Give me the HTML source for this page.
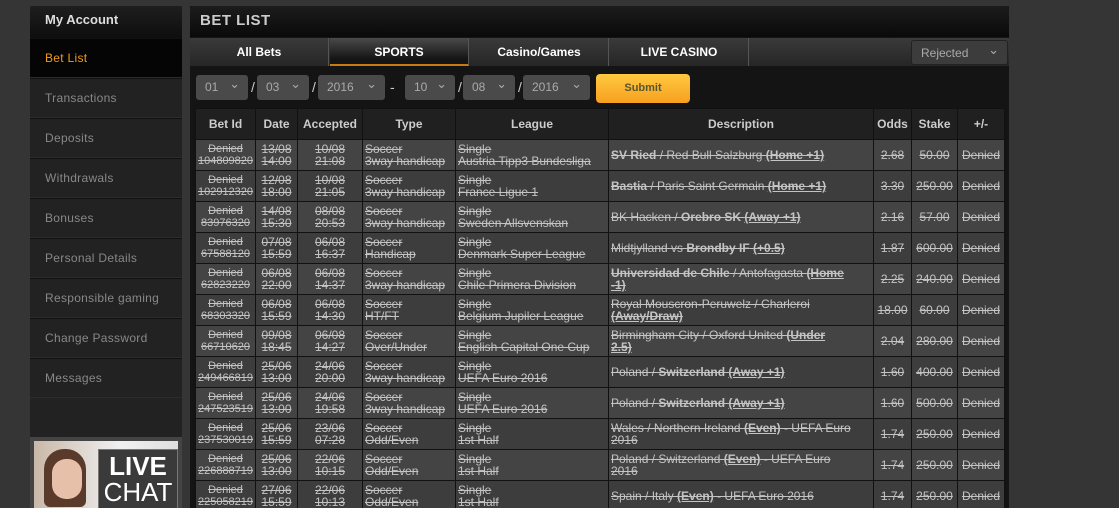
<!DOCTYPE html>
<html><head><meta charset="utf-8"><style>
*{box-sizing:border-box;margin:0;padding:0}
html,body{width:1119px;height:508px;overflow:hidden}
body{background:#353535;font-family:"Liberation Sans",Tahoma,sans-serif;position:relative}
.side{position:absolute;left:30px;top:6px;width:152px;height:502px;background:#222}
.side .hd{height:32px;background:linear-gradient(#1e1e1e,#0e0e0e);color:#ddd;font-weight:bold;font-size:13px;padding:6px 15px;border-radius:3px 3px 0 0}
.side .it{height:40px;border-top:1px solid #111;border-bottom:1px solid #2c2c2c;color:#888;font-size:12px;padding:12px 15px;letter-spacing:.3px}
.side .it.act{background:#050505;color:#f39a1d}
.chat{position:absolute;left:30px;top:437px;width:152px;height:71px;background:#444;padding:4px 4px 0 4px}
.chat .img{width:144px;height:67px;background:linear-gradient(90deg,#c9b8a8,#f1f1f1 60%,#ddd);position:relative;overflow:hidden}
.chat .box{position:absolute;left:64px;top:8px;width:80px;height:60px;background:#3a3a3a;border:1px solid #777;color:#fff;text-align:center;font-size:26px;line-height:26px;padding-top:3px}
.main{position:absolute;left:190px;top:6px;width:819px;height:502px;background:#141414}
.title{height:31px;background:linear-gradient(#1c1c1c,#0a0a0a);color:#ccc;font-weight:bold;font-size:15px;padding:6px 10px;letter-spacing:.5px;border-radius:3px 3px 0 0}
.tabs{position:absolute;top:32px;left:0;width:819px;height:28px;background:linear-gradient(#3a3a3a,#262626)}
.tab{position:absolute;top:0;height:28px;width:139px;color:#fff;font-weight:bold;font-size:12px;text-align:center;line-height:28px;border-right:1px solid #555}
.tab.act{background:linear-gradient(#4a4a4a,#151515 80%);border-bottom:2px solid #c97a10}
.sel{position:absolute;background:#4a4a4a;color:#aaa;font-size:12px;border-radius:3px;padding:5px 9px;height:25px}
.sel:after{content:"⌄";position:absolute;right:8px;top:1px;font-size:13px;color:#aaa}
.slash{position:absolute;color:#ccc;font-size:14px;top:73px}
.submit{position:absolute;left:406px;top:68px;width:94px;height:29px;border-radius:4px;background:linear-gradient(#ffc940,#f8a020);color:#553;font-weight:bold;font-size:11px;text-align:center;line-height:29px}
table{position:absolute;left:5px;top:102px;width:809px;border-collapse:collapse;table-layout:fixed;font-size:12px;color:#c4c4c4}
td,th{border:1px solid #111;height:31px;overflow:hidden;white-space:nowrap;line-height:12.5px}
th{background:#202020;color:#ccc;font-size:12px;height:31px}
td{text-decoration:line-through;padding:0 2px}
td:first-child{font-size:11px;padding:0}
tr:nth-child(odd) td{background:#3d3d3d}
tr:nth-child(even) td{background:#444}
.c{text-align:center}
b.u{text-decoration:underline line-through}
</style></head><body>
<div class="side">
<div class="hd">My Account</div>
<div class="it act">Bet List</div>
<div class="it">Transactions</div>
<div class="it">Deposits</div>
<div class="it">Withdrawals</div>
<div class="it">Bonuses</div>
<div class="it">Personal Details</div>
<div class="it">Responsible gaming</div>
<div class="it">Change Password</div>
<div class="it">Messages</div>
</div>
<div class="chat"><div class="img"><div style="position:absolute;left:10px;top:8px;width:42px;height:58px;border-radius:20px 20px 6px 6px;background:#5a3a2a"></div><div style="position:absolute;left:18px;top:18px;width:30px;height:40px;border-radius:14px;background:#e6c0a8"></div><div class="box"><b>LIVE</b><br>CHAT</div></div></div>
<div class="main">
<div class="title">BET LIST</div>
<div class="tabs">
<div class="tab" style="left:0">All Bets</div>
<div class="tab act" style="left:140px">SPORTS</div>
<div class="tab" style="left:280px">Casino/Games</div>
<div class="tab" style="left:420px">LIVE CASINO</div>
<div class="sel" style="left:721px;top:2px;width:97px;background:#3c3c3c;border:1px solid #222">Rejected</div>
</div>
<div class="sel" style="left:6px;top:69px;width:52px">01</div>
<div class="slash" style="left:61px">/</div>
<div class="sel" style="left:67px;top:69px;width:52px">03</div>
<div class="slash" style="left:122px">/</div>
<div class="sel" style="left:128px;top:69px;width:67px">2016</div>
<div class="slash" style="left:200px">-</div>
<div class="sel" style="left:215px;top:69px;width:50px">10</div>
<div class="slash" style="left:268px">/</div>
<div class="sel" style="left:273px;top:69px;width:52px">08</div>
<div class="slash" style="left:328px">/</div>
<div class="sel" style="left:333px;top:69px;width:67px">2016</div>
<div class="submit">Submit</div>
<table>
<colgroup><col style="width:60px"><col style="width:42px"><col style="width:65px"><col style="width:93px"><col style="width:153px"><col style="width:265px"><col style="width:38px"><col style="width:46px"><col style="width:47px"></colgroup>
<tr><th>Bet Id</th><th>Date</th><th>Accepted</th><th>Type</th><th>League</th><th>Description</th><th>Odds</th><th>Stake</th><th>+/-</th></tr>
<tr><td class="c">Denied<br>104809820</td><td class="c">13/08<br>14:00</td><td class="c">10/08<br>21:08</td><td>Soccer<br>3way handicap</td><td>Single<br>Austria Tipp3 Bundesliga</td><td><b>SV Ried</b> / Red Bull Salzburg <b class="u">(Home +1)</b></td><td class="c">2.68</td><td class="c">50.00</td><td class="c">Denied</td></tr>
<tr><td class="c">Denied<br>102912320</td><td class="c">12/08<br>18:00</td><td class="c">10/08<br>21:05</td><td>Soccer<br>3way handicap</td><td>Single<br>France Ligue 1</td><td><b>Bastia</b> / Paris Saint Germain <b class="u">(Home +1)</b></td><td class="c">3.30</td><td class="c">250.00</td><td class="c">Denied</td></tr>
<tr><td class="c">Denied<br>83976320</td><td class="c">14/08<br>15:30</td><td class="c">08/08<br>20:53</td><td>Soccer<br>3way handicap</td><td>Single<br>Sweden Allsvenskan</td><td>BK Hacken / <b>Orebro SK</b> <b class="u">(Away +1)</b></td><td class="c">2.16</td><td class="c">57.00</td><td class="c">Denied</td></tr>
<tr><td class="c">Denied<br>67588120</td><td class="c">07/08<br>15:59</td><td class="c">06/08<br>16:37</td><td>Soccer<br>Handicap</td><td>Single<br>Denmark Super League</td><td>Midtjylland vs <b>Brondby IF</b> <b class="u">(+0.5)</b></td><td class="c">1.87</td><td class="c">600.00</td><td class="c">Denied</td></tr>
<tr><td class="c">Denied<br>62823220</td><td class="c">06/08<br>22:00</td><td class="c">06/08<br>14:37</td><td>Soccer<br>3way handicap</td><td>Single<br>Chile Primera Division</td><td><b>Universidad de Chile</b> / Antofagasta <b class="u">(Home<br>-1)</b></td><td class="c">2.25</td><td class="c">240.00</td><td class="c">Denied</td></tr>
<tr><td class="c">Denied<br>68303320</td><td class="c">06/08<br>15:59</td><td class="c">06/08<br>14:30</td><td>Soccer<br>HT/FT</td><td>Single<br>Belgium Jupiler League</td><td>Royal Mouscron-Peruwelz / Charleroi<br><b class="u">(Away/Draw)</b></td><td class="c">18.00</td><td class="c">60.00</td><td class="c">Denied</td></tr>
<tr><td class="c">Denied<br>66710620</td><td class="c">09/08<br>18:45</td><td class="c">06/08<br>14:27</td><td>Soccer<br>Over/Under</td><td>Single<br>English Capital One Cup</td><td>Birmingham City / Oxford United <b class="u">(Under<br>2.5)</b></td><td class="c">2.04</td><td class="c">280.00</td><td class="c">Denied</td></tr>
<tr><td class="c">Denied<br>249466819</td><td class="c">25/06<br>13:00</td><td class="c">24/06<br>20:00</td><td>Soccer<br>3way handicap</td><td>Single<br>UEFA Euro 2016</td><td>Poland / <b>Switzerland</b> <b class="u">(Away +1)</b></td><td class="c">1.60</td><td class="c">400.00</td><td class="c">Denied</td></tr>
<tr><td class="c">Denied<br>247523519</td><td class="c">25/06<br>13:00</td><td class="c">24/06<br>19:58</td><td>Soccer<br>3way handicap</td><td>Single<br>UEFA Euro 2016</td><td>Poland / <b>Switzerland</b> <b class="u">(Away +1)</b></td><td class="c">1.60</td><td class="c">500.00</td><td class="c">Denied</td></tr>
<tr><td class="c">Denied<br>237530019</td><td class="c">25/06<br>15:59</td><td class="c">23/06<br>07:28</td><td>Soccer<br>Odd/Even</td><td>Single<br>1st Half</td><td>Wales / Northern Ireland <b class="u">(Even)</b> - UEFA Euro<br>2016</td><td class="c">1.74</td><td class="c">250.00</td><td class="c">Denied</td></tr>
<tr><td class="c">Denied<br>226888719</td><td class="c">25/06<br>13:00</td><td class="c">22/06<br>10:15</td><td>Soccer<br>Odd/Even</td><td>Single<br>1st Half</td><td>Poland / Switzerland <b class="u">(Even)</b> - UEFA Euro<br>2016</td><td class="c">1.74</td><td class="c">250.00</td><td class="c">Denied</td></tr>
<tr><td class="c">Denied<br>225058219</td><td class="c">27/06<br>15:59</td><td class="c">22/06<br>10:13</td><td>Soccer<br>Odd/Even</td><td>Single<br>1st Half</td><td>Spain / Italy <b class="u">(Even)</b> - UEFA Euro 2016</td><td class="c">1.74</td><td class="c">250.00</td><td class="c">Denied</td></tr>
</table>
</div>
</body></html>
